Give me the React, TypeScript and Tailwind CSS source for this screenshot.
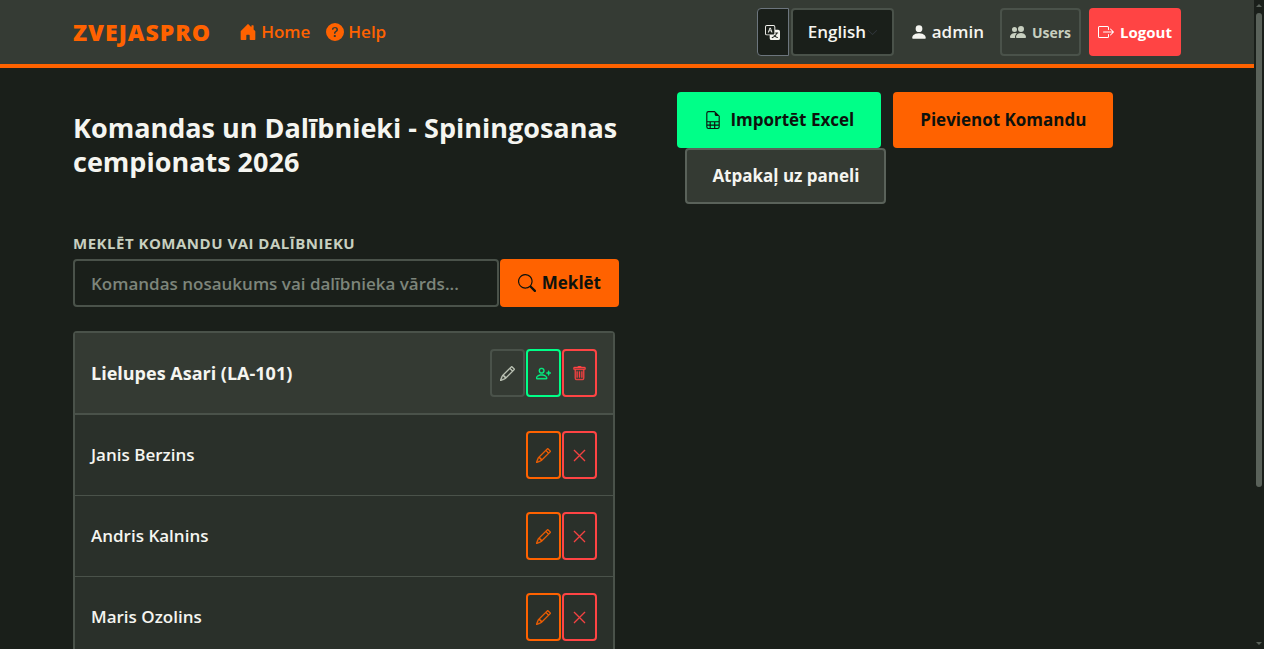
import { useState } from "react";
import {
  BsBoxArrowRight,
  BsChevronDown,
  BsFileEarmarkSpreadsheet,
  BsHouseDoorFill,
  BsPencil,
  BsPeopleFill,
  BsPersonFill,
  BsPersonPlus,
  BsQuestionCircleFill,
  BsSearch,
  BsTranslate,
  BsTrash,
  BsXLg,
} from "react-icons/bs";

const TEAM = {
  name: "Lielupes Asari (LA-101)",
  members: ["Janis Berzins", "Andris Kalnins", "Maris Ozolins"],
};

const TONES = {
  muted:  "border-[#4a524a] text-[#c8d0c0]",
  green:  "border-[#00ff88] text-[#00ff88]",
  orange: "border-[#ff6200] text-[#ff6200]",
  red:    "border-[#ff4444] text-[#ff4444]",
};

function IconButton({ tone, label, children }: { tone: keyof typeof TONES; label: string; children: React.ReactNode }) {
  return (
    <button type="button" aria-label={label} className={`flex h-12 w-[35px] items-center justify-center rounded border-2 text-[15px] [&>svg]:[stroke-width:0.4] ${TONES[tone]}`}>
      {children}
    </button>
  );
}

function Navbar() {
  const [language, setLanguage] = useState("en");

  return (
    <header className="border-b-4 border-[#ff6200] bg-[#353b34]">
      <nav className="mx-auto flex h-16 max-w-[1140px] items-center px-4">
        <a href="#" className="mr-7 text-[23px] font-extrabold tracking-[1px] text-[#ff6200]">ZVEJASPRO</a>
        <a href="#" className="mr-4 flex items-center gap-1 text-[17px] font-semibold text-[#ff6200]">
          <BsHouseDoorFill className="text-[18px]" /> Home
        </a>
        <a href="#" className="flex items-center gap-1 text-[17px] font-semibold text-[#ff6200]">
          <BsQuestionCircleFill className="text-[18px]" /> Help
        </a>

        <div className="ml-auto flex items-center">
          <label htmlFor="language" className="mr-0.5 flex h-12 w-8 items-center justify-center rounded-l border border-[#6c757d] bg-[#1a1f1a] text-[15px] text-[#f5f5f0]">
            <BsTranslate aria-label="Language" />
          </label>
          <div className="relative mr-4">
            <select
              id="language"
              value={language}
              onChange={e => setLanguage(e.target.value)}
              className="h-12 w-[103px] appearance-none rounded border-2 border-[#4a524a] bg-[#1a1f1a] pl-[15px] text-[17px] font-semibold text-[#f5f5f0]"
            >
              <option value="en">English</option>
              <option value="lv">Latviešu</option>
            </select>
            <BsChevronDown className="pointer-events-none absolute top-[19px] right-4 text-[11px] text-[#343a40]" />
          </div>
          <span className="mr-4 flex items-center gap-1 text-[17px] font-semibold text-[#f5f5f0]">
            <BsPersonFill className="text-[18px]" /> admin
          </span>
          <a href="#" className="mr-2 flex h-12 items-center gap-1.5 rounded border-2 border-[#4a524a] px-2 text-[14px] font-bold text-[#c8d0c0]">
            <BsPeopleFill className="text-[16px]" /> Users
          </a>
          <a href="#" className="flex h-12 items-center gap-1.5 rounded bg-[#ff4444] px-[9px] text-[15px] font-bold text-white">
            <BsBoxArrowRight className="text-[16px]" /> Logout
          </a>
        </div>
      </nav>
    </header>
  );
}

function TeamCard() {
  return (
    <section className="rounded border-2 border-[#4a524a] bg-[#2a302a]">
      <div className="flex h-[82px] items-center justify-between border-b-2 border-[#4a524a] bg-[#343a33] px-4">
        <h2 className="text-[18px] font-bold">{TEAM.name}</h2>
        <div className="flex gap-px">
          <IconButton tone="muted" label="Rediģēt komandu"><BsPencil /></IconButton>
          <IconButton tone="green" label="Pievienot dalībnieku"><BsPersonPlus /></IconButton>
          <IconButton tone="red" label="Dzēst komandu"><BsTrash /></IconButton>
        </div>
      </div>
      <ul>
        {TEAM.members.map(member => (
          <li key={member} className="flex h-[81px] items-center justify-between border-b border-[#4a524a] px-4">
            <span className="text-[17px] font-semibold">{member}</span>
            <div className="flex gap-px">
              <IconButton tone="orange" label={`Rediģēt ${member}`}><BsPencil /></IconButton>
              <IconButton tone="red" label={`Dzēst ${member}`}><BsXLg /></IconButton>
            </div>
          </li>
        ))}
      </ul>
    </section>
  );
}

function ScrollTrack() {
  return (
    <div aria-hidden="true" className="flex w-2.5 flex-col items-center bg-[#1a1f1a]">
      <div className="mt-1 h-0 w-0 border-x-3 border-b-3 border-x-transparent border-b-[#5a625a]" />
      <div className="mt-1.5 h-[73%] w-1.5 rounded-full bg-[#5a625a]" />
      <div className="mt-auto mb-1 h-0 w-0 border-x-3 border-t-3 border-x-transparent border-t-[#5a625a]" />
    </div>
  );
}

export default function App() {
  const [query, setQuery] = useState("");

  return (
    <div className="flex h-screen bg-[#1a1f1a] font-['Open_Sans','Noto_Sans',sans-serif] text-[#f5f5f0]">
      <div className="min-w-0 flex-1 overflow-hidden">
        <Navbar />
        <main className="mx-auto max-w-[1140px] px-4 pt-6">
          <div className="mb-[27px] flex items-start justify-between">
            <h1 className="mt-[19px] w-[53%] text-[27px] leading-[34px] font-bold">
              Komandas un Dalībnieki - Spiningosanas cempionats 2026
            </h1>
            <div className="flex w-5/11 flex-wrap gap-x-3">
              <button type="button" className="flex h-14 items-center gap-2 rounded bg-[#00ff88] px-[27px] text-[17px] font-bold text-[#0d120d]">
                <BsFileEarmarkSpreadsheet className="text-[18px]" /> Importēt Excel
              </button>
              <button type="button" className="h-14 rounded bg-[#ff6200] px-[27px] text-[17px] font-bold text-[#0d120d]">
                Pievienot Komandu
              </button>
              <a href="#" className="ml-2 flex h-14 items-center rounded border-2 border-[#5a625a] bg-[#343a33] px-[25px] text-[17px] font-bold">
                Atpakaļ uz paneli
              </a>
            </div>
          </div>

          <form className="mb-6 w-1/2 pr-2" onSubmit={e => e.preventDefault()}>
            <label htmlFor="search" className="mb-1 block text-[15px] leading-6 font-bold tracking-[0.5px] text-[#c8d0c0] uppercase">
              Meklēt komandu vai dalībnieku
            </label>
            <div className="flex gap-px">
              <input
                id="search"
                type="text"
                value={query}
                onChange={e => setQuery(e.target.value)}
                placeholder="Komandas nosaukums vai dalībnieka vārds..."
                className="h-12 min-w-0 flex-1 rounded border-2 border-[#4a524a] bg-[#1a1f1a] px-4 text-[17px] font-semibold placeholder:text-[#7d857b]"
              />
              <button type="submit" className="flex h-12 items-center gap-1.5 rounded bg-[#ff6200] px-[18px] text-[17px] font-bold text-[#0d120d]">
                <BsSearch className="text-[18px]" /> Meklēt
              </button>
            </div>
          </form>

          <div className="w-1/2 pr-3">
            <TeamCard />
          </div>
        </main>
      </div>
      <ScrollTrack />
    </div>
  );
}
